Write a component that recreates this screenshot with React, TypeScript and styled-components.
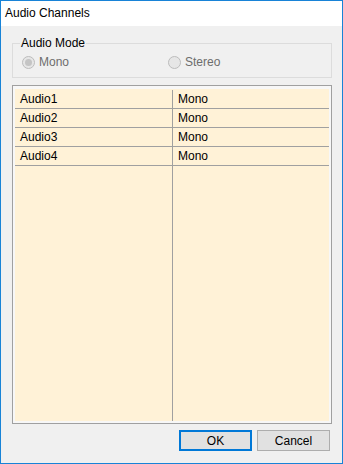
import styled, { createGlobalStyle } from 'styled-components';

const GlobalStyle = createGlobalStyle`
  html, body {
    margin: 0;
    padding: 0;
    background: #ffffff;
  }
  * {
    box-sizing: border-box;
  }
`;

const channels = [
  { name: 'Audio1', mode: 'Mono' },
  { name: 'Audio2', mode: 'Mono' },
  { name: 'Audio3', mode: 'Mono' },
  { name: 'Audio4', mode: 'Mono' },
];

const Radio = ({ label, checked }: { label: string; checked?: boolean }) => (
  <RadioStyle>
    <RadioCircle $checked={checked} />
    <span>{label}</span>
  </RadioStyle>
);

const App = () => {
  return (
    <>
      <GlobalStyle />
      <WindowStyle>
        <TitleBarStyle>Audio Channels</TitleBarStyle>
        <BodyStyle>
          <GroupBoxStyle>
            <legend>Audio Mode</legend>
            <RadioRowStyle>
              <Radio label="Mono" checked />
              <Radio label="Stereo" />
            </RadioRowStyle>
          </GroupBoxStyle>
          <ListFrameStyle>
            <ListStyle>
              {channels.map((item) => (
                <RowStyle key={item.name}>
                  <CellStyle>{item.name}</CellStyle>
                  <CellStyle>{item.mode}</CellStyle>
                </RowStyle>
              ))}
              <FillerStyle>
                <div />
                <div />
              </FillerStyle>
            </ListStyle>
          </ListFrameStyle>
          <ButtonBarStyle>
            <ButtonStyle $default>OK</ButtonStyle>
            <ButtonStyle>Cancel</ButtonStyle>
          </ButtonBarStyle>
        </BodyStyle>
      </WindowStyle>
    </>
  );
};

export default App;

const WindowStyle = styled.div`
  width: 343px;
  height: 464px;
  display: flex;
  flex-direction: column;
  border: 1px solid #1883d7;
  font-family: 'Segoe UI', 'Liberation Sans', Arial, sans-serif;
  font-size: 12px;
  color: #000000;
`;

const TitleBarStyle = styled.div`
  height: 25px;
  flex: none;
  display: flex;
  align-items: center;
  padding: 0 0 1px 4px;
  background: #ffffff;
`;

const BodyStyle = styled.div`
  flex: 1;
  display: flex;
  flex-direction: column;
  background: #f0f0f0;
  padding: 10px 10px 12px 11px;
  min-height: 0;
`;

const GroupBoxStyle = styled.fieldset`
  margin: 0;
  padding: 6px 0 8px 9px;
  border: 1px solid #dcdcdc;
  min-width: 0;

  legend {
    margin-left: -2px;
    padding: 0 1px;
    line-height: 14px;
    height: 14px;
  }
`;

const RadioRowStyle = styled.div`
  display: grid;
  grid-template-columns: 146px 1fr;
  height: 13px;
`;

const RadioStyle = styled.label`
  display: flex;
  align-items: center;
  gap: 4px;
  color: #6d6d6d;
  line-height: 13px;
`;

const RadioCircle = styled.span<{ $checked?: boolean }>`
  width: 13px;
  height: 13px;
  flex: none;
  border-radius: 50%;
  border: 1px solid #bcbcbc;
  background: #e6e6e6;
  display: flex;
  align-items: center;
  justify-content: center;

  &::after {
    content: '';
    display: ${(p) => (p.$checked ? 'block' : 'none')};
    width: 7px;
    height: 7px;
    border-radius: 50%;
    background: #c4c4c4;
  }
`;

const ListFrameStyle = styled.div`
  flex: 1;
  margin-top: 7px;
  display: flex;
  border: 1px solid #a0a0a0;
  background: #f7f7f7;
  padding: 3px 2px 2px 2px;
  min-height: 0;
`;

const ListStyle = styled.div`
  flex: 1;
  display: flex;
  flex-direction: column;
  padding-top: 1px;
  background: #fff2d7;
`;

const RowStyle = styled.div`
  display: grid;
  grid-template-columns: 157px 1fr;
  height: 19px;
  border-bottom: 1px solid #a0a0a0;
`;

const CellStyle = styled.div`
  padding-left: 5px;
  line-height: 18px;

  & + & {
    border-left: 1px solid #a0a0a0;
  }
`;

const FillerStyle = styled.div`
  flex: 1;
  display: grid;
  grid-template-columns: 157px 1fr;

  div + div {
    border-left: 1px solid #a0a0a0;
  }
`;

const ButtonBarStyle = styled.div`
  display: flex;
  justify-content: flex-end;
  gap: 5px;
  margin: 6px 2px 0 0;
  flex: none;
`;

const ButtonStyle = styled.button<{ $default?: boolean }>`
  width: 73px;
  height: 21px;
  margin: 0;
  padding: 0;
  font: inherit;
  color: #000000;
  background: #e1e1e1;
  border: ${(p) => (p.$default ? '2px solid #0078d7' : '1px solid #adadad')};
`;
